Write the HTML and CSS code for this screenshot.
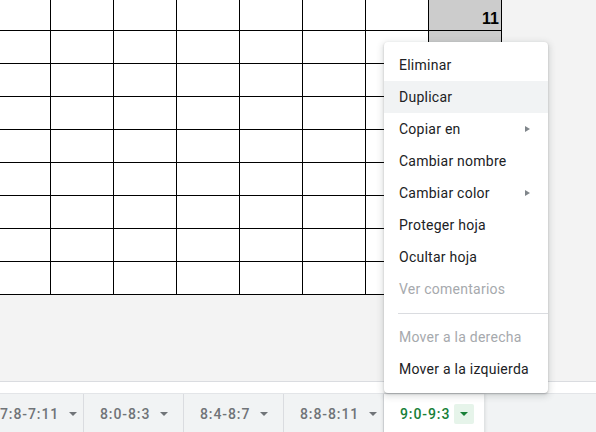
FILE: index.html
```html
<!DOCTYPE html>
<html lang="es">
<head>
<meta charset="utf-8">
<title>Hoja</title>
<link rel="stylesheet" href="styles.css">
</head>
<body>
<div class="sheet">
  <div class="grid">
    <div class="c"></div><div class="c"></div><div class="c"></div><div class="c"></div><div class="c"></div><div class="c"></div><div class="c"></div><div class="c g num">11</div>
    <div class="c"></div><div class="c"></div><div class="c"></div><div class="c"></div><div class="c"></div><div class="c"></div><div class="c"></div><div class="c g"></div>
    <div class="c"></div><div class="c"></div><div class="c"></div><div class="c"></div><div class="c"></div><div class="c"></div><div class="c"></div><div class="c g"></div>
    <div class="c"></div><div class="c"></div><div class="c"></div><div class="c"></div><div class="c"></div><div class="c"></div><div class="c"></div><div class="c g"></div>
    <div class="c"></div><div class="c"></div><div class="c"></div><div class="c"></div><div class="c"></div><div class="c"></div><div class="c"></div><div class="c g"></div>
    <div class="c"></div><div class="c"></div><div class="c"></div><div class="c"></div><div class="c"></div><div class="c"></div><div class="c"></div><div class="c g"></div>
    <div class="c"></div><div class="c"></div><div class="c"></div><div class="c"></div><div class="c"></div><div class="c"></div><div class="c"></div><div class="c g"></div>
    <div class="c"></div><div class="c"></div><div class="c"></div><div class="c"></div><div class="c"></div><div class="c"></div><div class="c"></div><div class="c g"></div>
    <div class="c"></div><div class="c"></div><div class="c"></div><div class="c"></div><div class="c"></div><div class="c"></div><div class="c"></div><div class="c g"></div>
  </div>
</div>
<div class="scroll"></div>
<div class="tabs">
  <div class="tab first"><span class="label">7:8-7:11</span><span class="drop"></span></div>
  <div class="tab"><span class="label">8:0-8:3</span><span class="drop"></span></div>
  <div class="tab"><span class="label">8:4-8:7</span><span class="drop"></span></div>
  <div class="tab"><span class="label">8:8-8:11</span><span class="drop"></span></div>
  <div class="tab active"><span class="label">9:0-9:3</span><span class="drop"></span></div>
</div>
<div class="menu">
  <div class="item">Eliminar</div>
  <div class="item hl">Duplicar</div>
  <div class="item sub">Copiar en</div>
  <div class="item">Cambiar nombre</div>
  <div class="item sub">Cambiar color</div>
  <div class="item">Proteger hoja</div>
  <div class="item">Ocultar hoja</div>
  <div class="item dis">Ver comentarios</div>
  <div class="sep"></div>
  <div class="item dis">Mover a la derecha</div>
  <div class="item">Mover a la izquierda</div>
</div>
</body>
</html>
```
FILE: styles.css
```css
html, body {
  margin: 0;
  padding: 0;
}
body {
  width: 596px;
  height: 432px;
  overflow: hidden;
  position: relative;
  background: #f3f3f3;
  font-family: Roboto, "Liberation Sans", sans-serif;
}
.sheet {
  height: 381px;
  overflow: hidden;
}
.grid {
  display: grid;
  grid-template-columns: repeat(7, 62px) 72px;
  grid-auto-rows: 32px;
  gap: 1px;
  background: #000;
  padding: 0 1px 1px 0;
  margin: -2px 0 0 -12px;
  width: max-content;
}
.c {
  background: #fff;
}
.c.g {
  background: #cccccc;
}
.num {
  display: flex;
  align-items: flex-end;
  justify-content: flex-end;
  padding: 0 2px 2px 0;
  font-family: "Liberation Sans", Arial, sans-serif;
  font-weight: bold;
  font-size: 16px;
  line-height: 18px;
  color: #000;
}
.scroll {
  height: 11px;
  background: #fff;
  border-top: 1px solid #dadce0;
}
.tabs {
  display: flex;
  height: 39px;
  background: #f1f3f4;
  border-top: 1px solid #e3e5e8;
}
.tab {
  flex: none;
  box-sizing: border-box;
  width: 100px;
  border-right: 1px solid #dadce0;
  display: flex;
  align-items: center;
  padding-left: 16px;
  gap: 4px;
  font-size: 14px;
  font-weight: 500;
  letter-spacing: 0.9px;
  color: #707478;
  white-space: nowrap;
}
.tab.first {
  margin-left: -16px;
}
.drop {
  flex: none;
  width: 20px;
  height: 20px;
  border-radius: 2px;
  display: flex;
  align-items: center;
  justify-content: center;
}
.drop::after {
  content: "";
  width: 0;
  height: 0;
  border-left: 4px solid transparent;
  border-right: 4px solid transparent;
  border-top: 4px solid #707478;
}
.tab.active {
  background: #fff;
  color: #188038;
  border-right: none;
  box-shadow: 0 1px 3px 1px rgba(60, 64, 67, 0.15);
  position: relative;
}
.tab.active .drop {
  background: #e6f4ea;
}
.tab.active .drop::after {
  border-top-color: #188038;
}
.menu {
  position: absolute;
  left: 384px;
  top: 42px;
  width: 164px;
  background: #fff;
  border-radius: 4px;
  padding: 7px 0 8px;
  box-shadow: 0 2px 6px 2px rgba(60, 64, 67, 0.15), 0 1px 2px rgba(60, 64, 67, 0.3);
}
.item {
  height: 32px;
  display: flex;
  align-items: center;
  padding: 0 18px 0 15px;
  font-size: 14px;
  letter-spacing: 0.25px;
  color: #202124;
  white-space: nowrap;
}
.item.hl {
  background: #f1f3f4;
}
.item.dis {
  color: #a6a9ad;
}
.item.sub::after {
  content: "";
  margin-left: auto;
  width: 0;
  height: 0;
  border-left: 5px solid #80868b;
  border-top: 3px solid transparent;
  border-bottom: 3px solid transparent;
}
.sep {
  height: 1px;
  background: #dadce0;
  margin: 8px 0 7px 14px;
}
```
